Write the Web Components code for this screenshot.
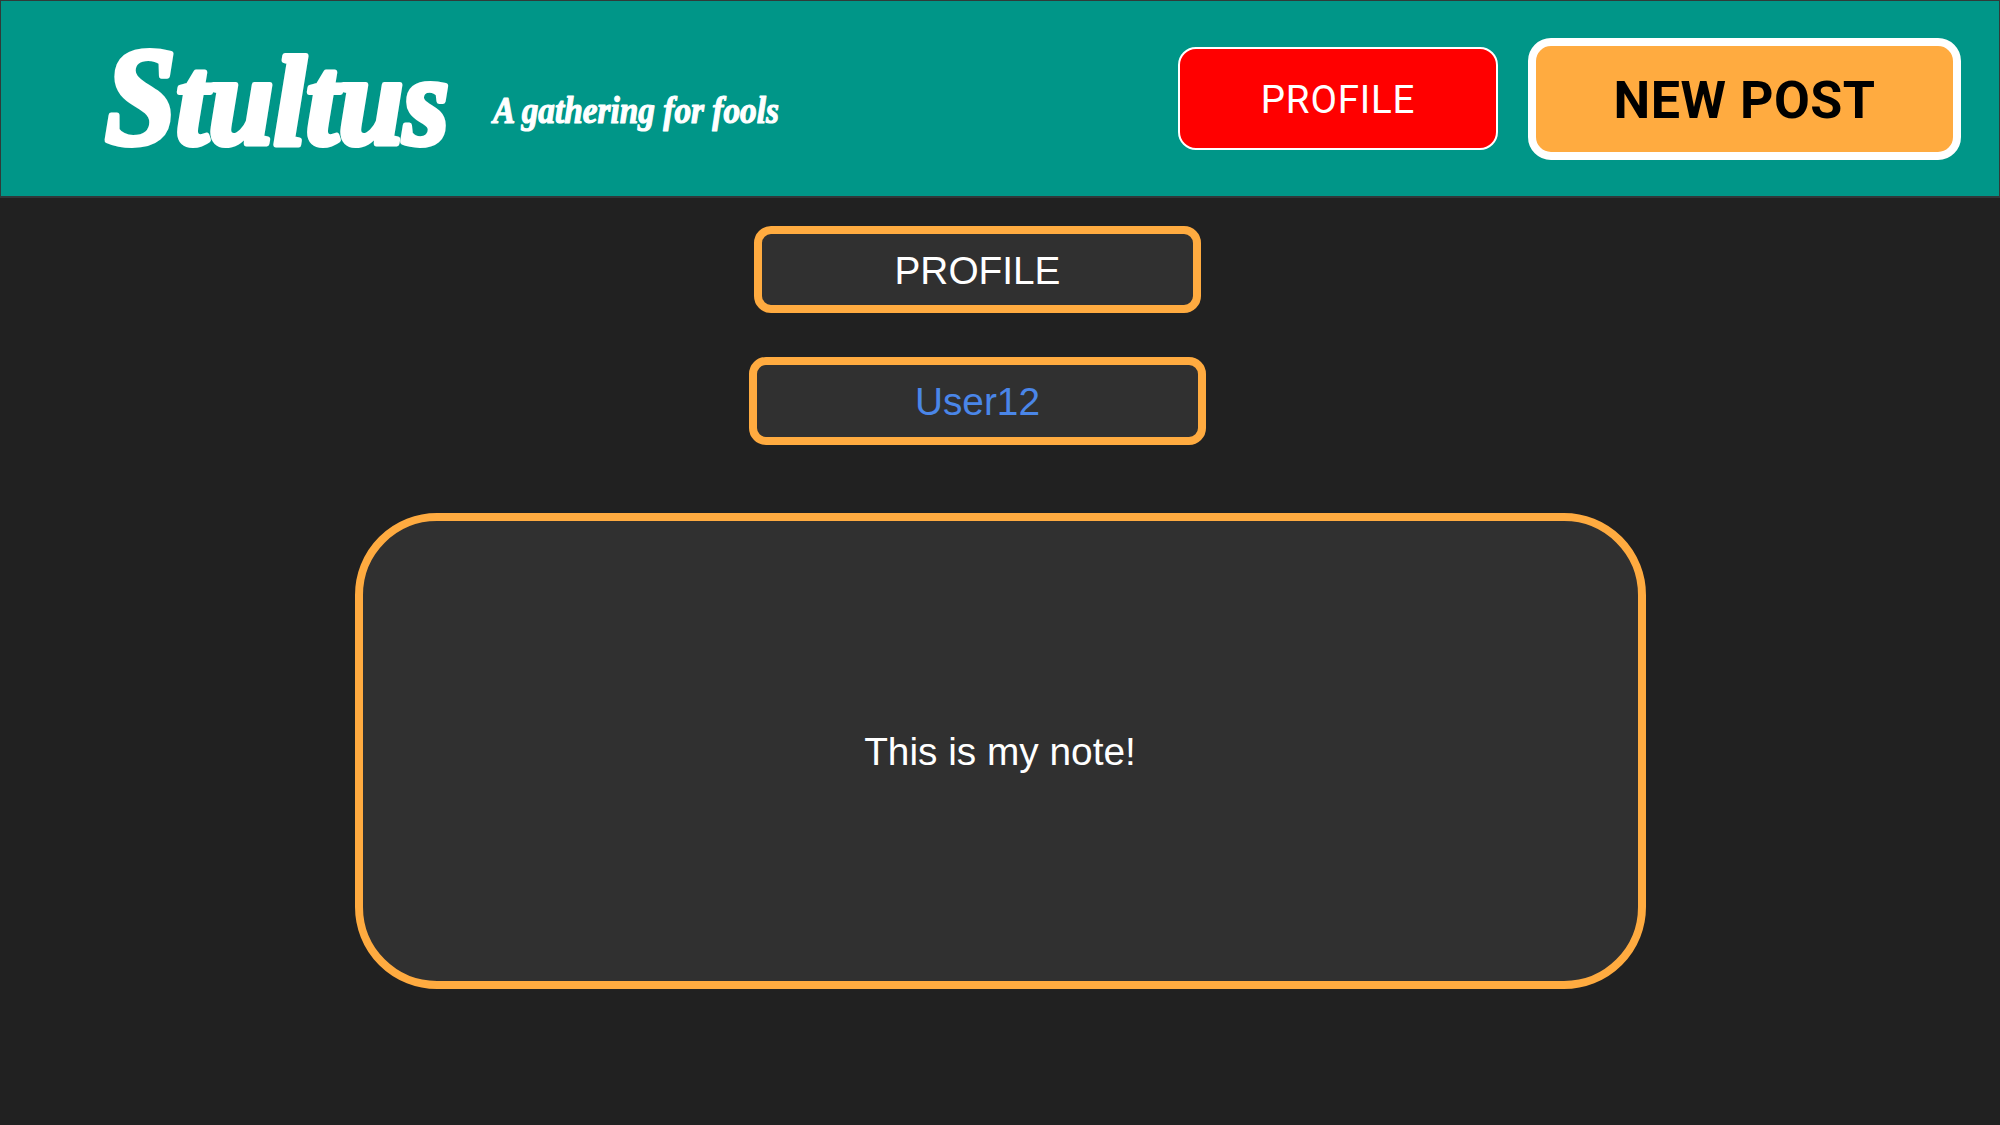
<!DOCTYPE html>
<html lang="en">
<head>
<meta charset="utf-8">
<title>Stultus</title>
<style>
html,body{margin:0;height:100%;background:#212121;overflow:hidden}
</style>
</head>
<body>
<stultus-app></stultus-app>
<script>
const define = (name, html) => {
  const template = document.createElement('template');
  template.innerHTML = html;
  customElements.define(name, class extends HTMLElement {
    constructor() {
      super();
      this.attachShadow({ mode: 'open' }).append(template.content.cloneNode(true));
    }
  });
};

define('brand-logo', `
<style>
:host{display:flex;align-items:flex-start;height:196px}
svg{display:block;overflow:visible;fill:#fff;stroke:#fff;stroke-linejoin:round;
  font-family:"Liberation Serif",serif;font-weight:700;font-style:italic}
.name{stroke-width:6px}
.tag{stroke-width:1.2px;margin-left:37px}
</style>
<svg class="name" width="350" height="196"><text x="1" y="143" font-size="140" textLength="344" lengthAdjust="spacingAndGlyphs">S<tspan font-size="128">tultus</tspan></text></svg>
<svg class="tag" width="290" height="196"><text x="2" y="121.5" font-size="38" textLength="286" lengthAdjust="spacingAndGlyphs">A gathering for fools</text></svg>
`);

define('header-button', `
<style>
:host{display:block;flex:none}
button{display:flex;align-items:center;justify-content:center;box-sizing:border-box;width:320px;height:103px;margin:0;padding:4px 0 0;
  border:2px solid #fff;border-radius:18px;background:#f00;color:#fff;
  font:400 38.5px/1 Roboto,sans-serif;letter-spacing:.8px;white-space:nowrap}
:host([primary]) button{width:433px;height:122px;border-width:8px;border-radius:23px;background:#ffab40;color:#000;
  font-weight:700;font-size:52px;letter-spacing:.5px;padding-top:5px}
</style>
<button><slot></slot></button>
`);

define('site-header', `
<style>
:host{display:flex;align-items:center;box-sizing:border-box;width:2000px;height:198px;padding:0 38px 0 103px;
  border:1px solid #303b39;border-bottom:2px solid #30383a;background:#009688}
.actions{display:flex;align-items:center;gap:30px;margin-left:auto}
</style>
<slot></slot>
<div class="actions"><slot name="actions"></slot></div>
`);

define('note-panel', `
<style>
:host{display:flex;align-items:center;justify-content:center;box-sizing:border-box;border:8px solid #ffab40;border-radius:17px;
  background:#303030;color:#fff;font:38.8px/39px "Liberation Sans",Arial,sans-serif;padding-top:1px;white-space:nowrap}
</style>
<slot></slot>
`);

define('stultus-app', `
<style>
:host{display:flex;flex-direction:column;width:2000px;height:1125px;background:#212121}
main{display:flex;flex-direction:column;align-items:center}
.labels{display:flex;flex-direction:column;align-items:center;gap:44px;margin:28px 45px 0 0}
.title{width:447px;height:87px}
.user{width:457px;height:88px;color:#4a86e8}
.note{width:1291px;height:476px;margin-top:68px;border-radius:82px;padding:0}
</style>
<site-header>
  <brand-logo></brand-logo>
  <header-button slot="actions">PROFILE</header-button>
  <header-button slot="actions" primary>NEW POST</header-button>
</site-header>
<main>
  <div class="labels">
    <note-panel class="title">PROFILE</note-panel>
    <note-panel class="user">User12</note-panel>
  </div>
  <note-panel class="note">This is my note!</note-panel>
</main>
`);
</script>
</body>
</html>
